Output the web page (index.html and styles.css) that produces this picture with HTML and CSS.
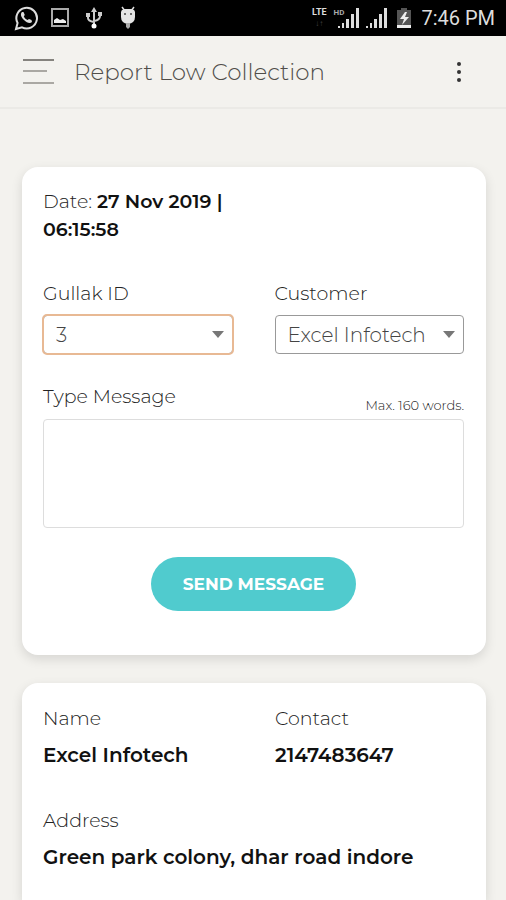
FILE: index.html
```html
<!DOCTYPE html>
<html lang="en">
<head>
<meta charset="utf-8">
<meta name="viewport" content="width=device-width, initial-scale=1">
<title>Report Low Collection</title>
<link rel="stylesheet" href="styles.css">
</head>
<body>
<div class="status">
  <div class="status-left">
    <svg width="24" height="26" viewBox="0 0 24 26" fill="none" stroke="#ddd" stroke-width="2"><path d="M2 24l1.600-6A10.300 10.300 0 1 1 8 22.300z"/><path d="M8 7c-2 2-1 5 2 8s6 4 8 2l-.5-2-2.500-1-1.500 1c-2-.8-3-2-3.700-3.700l1-1.300L9.500 7z" fill="#ddd" stroke="none"/></svg>
    <svg width="24" height="20" viewBox="-3 0 24 20"><rect x="1" y="1" width="16" height="17" fill="none" stroke="#aaa" stroke-width="2"/><path d="M3 15v-3l3-2 3 2 3-1 3 2v2z" fill="#eee"/></svg>
    <svg width="24" height="22" viewBox="-4 0 24 22" fill="none" stroke="#ccc" stroke-width="2"><path d="M8 3v15M2 8v3q0 3 6 4M14 6v3q0 4-6 5"/><path d="M8 0l3 5H5zM0 6h4v4H0zM12 5h4v4h-4z" fill="#ccc" stroke="none"/><circle cx="8" cy="19" r="2.500" fill="#fff" stroke="none"/></svg>
    <svg width="24" height="24" viewBox="-4 0 24 24"><path d="M2 1l3 4M14 1l-3 4" stroke="#ddd" stroke-width="1.500"/><path d="M1 6q0-2 3-3h8q3 1 3 3v5q0 6-7 7-7-1-7-7z" fill="#e4e4e4"/><path d="M6 17h4v4l-2 2-2-2z" fill="#aaa"/><circle cx="5" cy="8" r="1" fill="#444"/><circle cx="11" cy="8" r="1" fill="#444"/></svg>
  </div>
  <div class="status-right">
    <span class="net"><b>LTE</b><i>↓↑</i></span>
    <span class="signal"><small>HD</small>
    <svg width="21" height="20" viewBox="0 0 21 20"><path d="M0 18h2v2H0zM4 15h2v5H4zM8 11h3v9H8zM13 6h3v14h-3zM18 0h3v20h-3z" fill="#ddd"/></svg></span>
    <svg width="21" height="20" viewBox="0 0 21 20"><path d="M0 18h2v2H0zM4 15h2v5H4zM8 11h3v9H8zM13 6h3v14h-3zM18 0h3v20h-3z" fill="#ddd"/></svg>
    <svg class="battery" width="14" height="20" viewBox="0 0 14 20"><path d="M4 0h6v2h4v18H0V2h4z" fill="#555"/><path d="M0 17h14v3H0zM8 4L3 11h4l-2 6 7-8H8l2-5z" fill="#eee"/></svg>
    <span class="clock">7:46 PM</span>
  </div>
</div>
<header class="bar">
  <button class="icon-btn" type="button" aria-label="Menu"><svg width="32" height="26" viewBox="0 0 32 26" stroke-width="2"><path d="M0 1h31" stroke="#85837e"/><path d="M0 12h24M0 24h31" stroke="#aaa8a3"/></svg></button>
  <h1>Report Low Collection</h1>
  <button class="icon-btn more" type="button" aria-label="More options"><svg width="6" height="22" viewBox="0 0 6 22" fill="#333"><circle cx="3" cy="3" r="2"/><circle cx="3" cy="11" r="2"/><circle cx="3" cy="19" r="2"/></svg></button>
</header>
<main>
  <form class="card form">
    <p class="date">Date: <strong>27 Nov 2019 |<br>06:15:58</strong></p>
    <div class="columns">
      <div class="field">
        <label for="gullak">Gullak ID</label>
        <div class="picker"><select class="active" id="gullak"><option>3</option></select></div>
      </div>
      <div class="field">
        <label for="customer">Customer</label>
        <div class="picker"><select id="customer"><option>Excel Infotech</option></select></div>
      </div>
    </div>
    <div class="message-head"><label for="message">Type Message</label><small>Max. 160 words.</small></div>
    <textarea id="message"></textarea>
    <button class="send" type="button">SEND MESSAGE</button>
  </form>
  <section class="card details">
    <dl class="columns">
      <div><dt>Name</dt><dd>Excel Infotech</dd></div>
      <div><dt>Contact</dt><dd>2147483647</dd></div>
      <div class="wide"><dt>Address</dt><dd>Green park colony, dhar road indore</dd></div>
    </dl>
  </section>
</main>
</body>
</html>
```
FILE: styles.css
```css
* { box-sizing: border-box; }
body {
  margin: 0;
  min-height: 100vh;
  display: flex;
  flex-direction: column;
  background: #f3f2ee;
  color: #222;
  font: 300 19px/28px Montserrat, Inter, sans-serif;
}
button, select, textarea { font: inherit; }
h1, p, dl, dd { margin: 0; }
.status {
  display: flex;
  align-items: center;
  justify-content: space-between;
  height: 36px;
  padding: 0 11px 0 14px;
  background: #000;
  color: #ddd;
}
.status-left { display: flex; align-items: center; gap: 10px; }
.status-right { display: flex; align-items: center; gap: 7px; }
.net { display: flex; flex-direction: column; font: 9px/11px Roboto, sans-serif; text-align: center; }
.net i { color: #444; font-style: normal; font-size: 8px; }
.signal { display: flex; }
.signal small { font: 700 8px/10px Roboto, sans-serif; margin-right: -6px; color: #aaa; }
.battery { margin: 0 3px; }
.clock { font: 400 20px/24px Roboto, sans-serif; }
.bar {
  display: flex;
  align-items: center;
  height: 73px;
  padding: 0 44px 0 23px;
  border-bottom: 2px solid #ebeae6;
}
h1 { flex: 1; margin-left: 19px; color: #504e4a; font-size: 23px; font-weight: 300; }
.icon-btn { display: flex; padding: 0; border: 0; background: none; }
main {
  flex: 1;
  display: flex;
  flex-direction: column;
  gap: 28px;
  padding: 58px 20px 0 22px;
}
.card {
  padding: 21px 22px 44px 21px;
  border-radius: 16px;
  background: #fff;
  box-shadow: 0 4px 12px rgba(0, 0, 0, .12);
}
.form { display: flex; flex-direction: column; }
strong, dd { color: #111; font-weight: 600; }
.columns { display: grid; grid-template-columns: 1fr 1fr; column-gap: 42px; }
.form .columns { margin: 36px 0 29px; }
.field { display: flex; flex-direction: column; gap: 7px; min-width: 0; }
.picker { display: grid; align-items: center; }
.picker::after {
  content: "";
  grid-area: 1 / 1;
  justify-self: end;
  margin-right: 9px;
  border: 6px solid transparent;
  border-top: 7px solid #777;
  border-bottom: 0;
  pointer-events: none;
}
select {
  grid-area: 1 / 1;
  appearance: none;
  width: 100%;
  height: 39px;
  padding: 0 24px 0 12px;
  border: 1px solid #999;
  border-radius: 4px;
  background: #fff;
  color: #444;
  font-size: 20px;
}
select.active { outline: 2px solid #e8b994; outline-offset: -1px; }
.message-head { display: flex; align-items: flex-end; justify-content: space-between; height: 36px; }
.message-head label { align-self: flex-start; }
small { font-size: 13px; line-height: 28px; }
textarea {
  width: 100%;
  height: 109px;
  padding: 8px 12px;
  border: 1px solid #ddd;
  border-radius: 4px;
  resize: none;
}
.send {
  align-self: center;
  height: 54px;
  margin-top: 29px;
  padding: 0 32px;
  border: 0;
  border-radius: 27px;
  background: #50cbce;
  color: #fff;
  font-size: 17px;
  font-weight: 700;
}
.details { flex: 1; padding: 22px 21px 20px; border-radius: 16px 16px 0 0; }
.details .columns { row-gap: 38px; }
dd { margin-top: 8px; font-size: 20px; }
.wide { grid-column: 1 / -1; }
```
